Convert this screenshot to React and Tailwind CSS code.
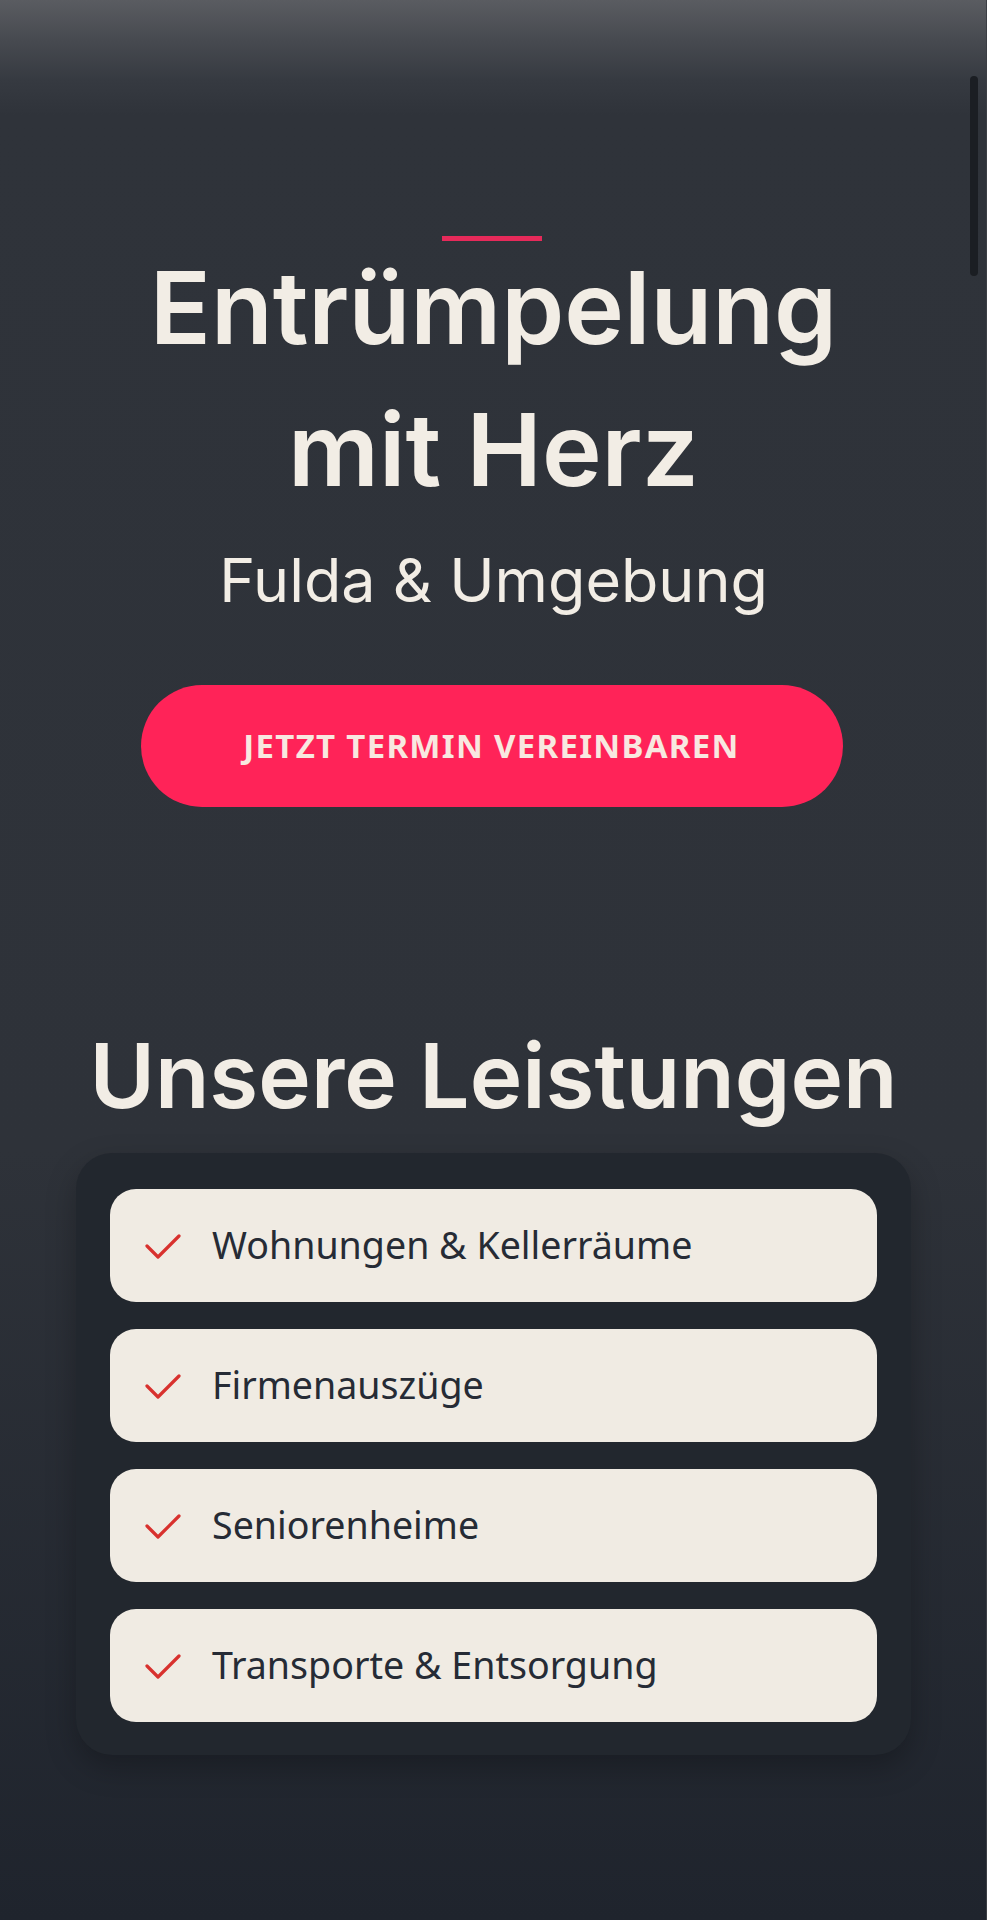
import React from "react";

const services = [
  "Wohnungen & Kellerräume",
  "Firmenauszüge",
  "Seniorenheime",
  "Transporte & Entsorgung",
];

function Check() {
  return (
    <svg width="36" height="26" viewBox="0 0 36 26" fill="none" className="shrink-0">
      <path d="M2 13 L13 24 L34 3" stroke="#d8312e" strokeWidth="3.2" strokeLinecap="round" strokeLinejoin="round" />
    </svg>
  );
}

export default function App() {
  return (
    <div className="relative w-full min-h-[1920px] overflow-hidden bg-[linear-gradient(180deg,#5a5c61_0px,#474a50_40px,#363a41_80px,#2f333a_115px,#2e3239_1150px,#1f242d_1920px)]">
      {/* scrollbar overlay */}
      <div className="absolute right-[9px] top-[76px] w-[8px] h-[200px] rounded-full bg-[#1b1e23]" />
      <div className="absolute right-0 top-0 w-px h-full bg-[#3b3e44]" />

      <section className="flex flex-col items-center pt-[236px]">
        <div className="w-[100px] h-[5px] bg-[#e62a5a] mb-[-5px] -translate-x-[2px]" />
        <h1 className="font-['Inter',sans-serif] text-[101px] leading-[142px] font-semibold text-[#f2ede5] text-center">
          Entrümpelung
          <br />
          mit Herz
        </h1>
        <p className="mt-[24px] font-['Inter',sans-serif] text-[61px] leading-[72px] font-normal text-[#f2ede5] text-center">
          Fulda &amp; Umgebung
        </p>
        <button className="mt-[69px] w-[702px] h-[122px] rounded-full bg-[#ff2358] flex items-center justify-center font-['Noto_Sans',sans-serif] text-[33px] font-bold tracking-[1.3px] text-[#f8e8e0] -translate-x-[2px]">
          JETZT TERMIN VEREINBAREN
        </button>
      </section>

      <section className="flex flex-col items-center mt-[216px]">
        <h2 className="font-['Inter',sans-serif] text-[89px] leading-[106px] font-semibold text-[#f2ede5] text-center">
          Unsere Leistungen
        </h2>
        <div className="mt-[24px] w-[835px] rounded-[36px] bg-[#22272e] px-[34px] pt-[36px] pb-[33px] flex flex-col gap-[27px] shadow-[0_12px_30px_rgba(0,0,0,0.25)]">
          {services.map((s) => (
            <div
              key={s}
              className="h-[113px] rounded-[26px] bg-[#f0ebe3] flex items-center pl-[35px] gap-[31px]"
            >
              <Check />
              <span className="font-['Noto_Sans',sans-serif] text-[37.6px] text-[#262b35]">{s}</span>
            </div>
          ))}
        </div>
      </section>
    </div>
  );
}
